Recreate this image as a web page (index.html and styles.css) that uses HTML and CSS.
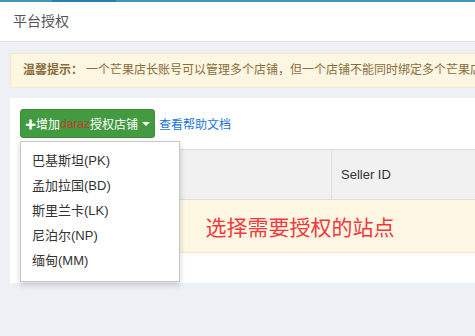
FILE: index.html
```html
<!DOCTYPE html>
<html lang="zh-CN">
<head>
    <meta charset="UTF-8">
    <title>平台授权</title>
    <link rel="stylesheet" href="styles.css">
</head>
<body>
    <div class="top-bar">
        <span class="top-bar-active"></span>
    </div>
    <div class="page-header">平台授权</div>

    <div class="page-body">
        <div class="alert">
            <b>温馨提示：</b>一个芒果店长账号可以管理多个店铺，但一个店铺不能同时绑定多个芒果店长账号
        </div>

        <div class="panel">
            <div class="toolbar">
                <div class="dropdown">
                    <button class="add-button"><span class="plus">✚</span>增加<span class="brand">daraz</span>授权店铺<span class="caret"></span></button>
                    <ul class="dropdown-menu">
                        <li>巴基斯坦(PK)</li>
                        <li>孟加拉国(BD)</li>
                        <li>斯里兰卡(LK)</li>
                        <li>尼泊尔(NP)</li>
                        <li>缅甸(MM)</li>
                    </ul>
                </div>
                <a class="help-link" href="#">查看帮助文档</a>
            </div>

            <table class="shop-table">
                <thead>
                    <tr>
                        <th class="col-name"></th>
                        <th>Seller ID</th>
                    </tr>
                </thead>
                <tbody>
                    <tr class="empty-row">
                        <td colspan="2">选择需要授权的站点</td>
                    </tr>
                </tbody>
            </table>
        </div>
    </div>
</body>
</html>
```

FILE: styles.css
```css
* {
    margin: 0;
    padding: 0;
    box-sizing: border-box;
}

body {
    font-family: "Liberation Sans", "Noto Sans CJK SC", sans-serif;
    background-color: #edf0f5;
    width: 475px;
    height: 336px;
    overflow: hidden;
    color: #333;
}

.top-bar {
    height: 2px;
    background-color: #4592bc;
}

.top-bar-active {
    display: block;
    width: 64px;
    height: 2px;
    margin-left: 52px;
    background-color: #2d7fab;
}

.page-header {
    height: 40px;
    line-height: 39px;
    padding-left: 13px;
    background-color: white;
    border-bottom: 1px solid #dfe3e8;
    font-size: 14px;
    color: #555;
}

.page-body {
    padding: 11px 0 0 10px;
}

.alert {
    height: 35px;
    line-height: 33px;
    padding-left: 12px;
    white-space: nowrap;
    overflow: hidden;
    background-color: #fcf6e3;
    border: 1px solid #fae7c0;
    border-right: none;
    font-size: 12px;
    color: #8a6d3b;
}

.alert b {
    margin-right: 3px;
}

.panel {
    margin-top: 10px;
    height: 185px;
    padding: 11px 0 0 10px;
    background-color: white;
}

.toolbar {
    display: flex;
    align-items: center;
    gap: 4px;
    height: 29px;
}

.dropdown {
    position: relative;
}

.add-button {
    height: 29px;
    padding: 0 4px 0 4px;
    background-color: #439b41;
    border: 1px solid #3b8e3a;
    border-radius: 3px;
    color: white;
    font-family: inherit;
    font-size: 12px;
    display: flex;
    align-items: center;
    white-space: nowrap;
}

.plus {
    font-size: 11px;
    font-weight: bold;
}

.brand {
    color: #c03e2c;
}

.caret {
    display: inline-block;
    margin-left: 4px;
    border-top: 4px solid white;
    border-left: 4px solid transparent;
    border-right: 4px solid transparent;
}

.dropdown-menu {
    position: absolute;
    top: 32px;
    left: 0;
    width: 160px;
    padding: 6px 0 8px;
    list-style: none;
    background-color: white;
    border: 1px solid #c8c8c8;
    box-shadow: 0 3px 6px rgba(0,0,0,0.18);
    z-index: 2;
}

.dropdown-menu li {
    height: 25px;
    line-height: 25px;
    padding-left: 11px;
    font-size: 13px;
    color: #333;
}

.help-link {
    font-size: 12px;
    color: #1a73d9;
    text-decoration: none;
}

.shop-table {
    margin-top: 11px;
    width: 520px;
    border-collapse: collapse;
    font-size: 13px;
}

.shop-table th {
    height: 50px;
    padding-left: 9px;
    text-align: left;
    font-weight: normal;
    background-color: #f1f1f1;
    border: 1px solid #dcdcdc;
    color: #333;
}

.shop-table .col-name {
    width: 311px;
}

.empty-row td {
    height: 53px;
    padding-left: 185px;
    background-color: #fdf6e3;
    border-top: 1px solid #fae7c0;
    border-bottom: 1px solid #fae7c0;
    font-size: 21px;
    color: #f03a3e;
}
```
